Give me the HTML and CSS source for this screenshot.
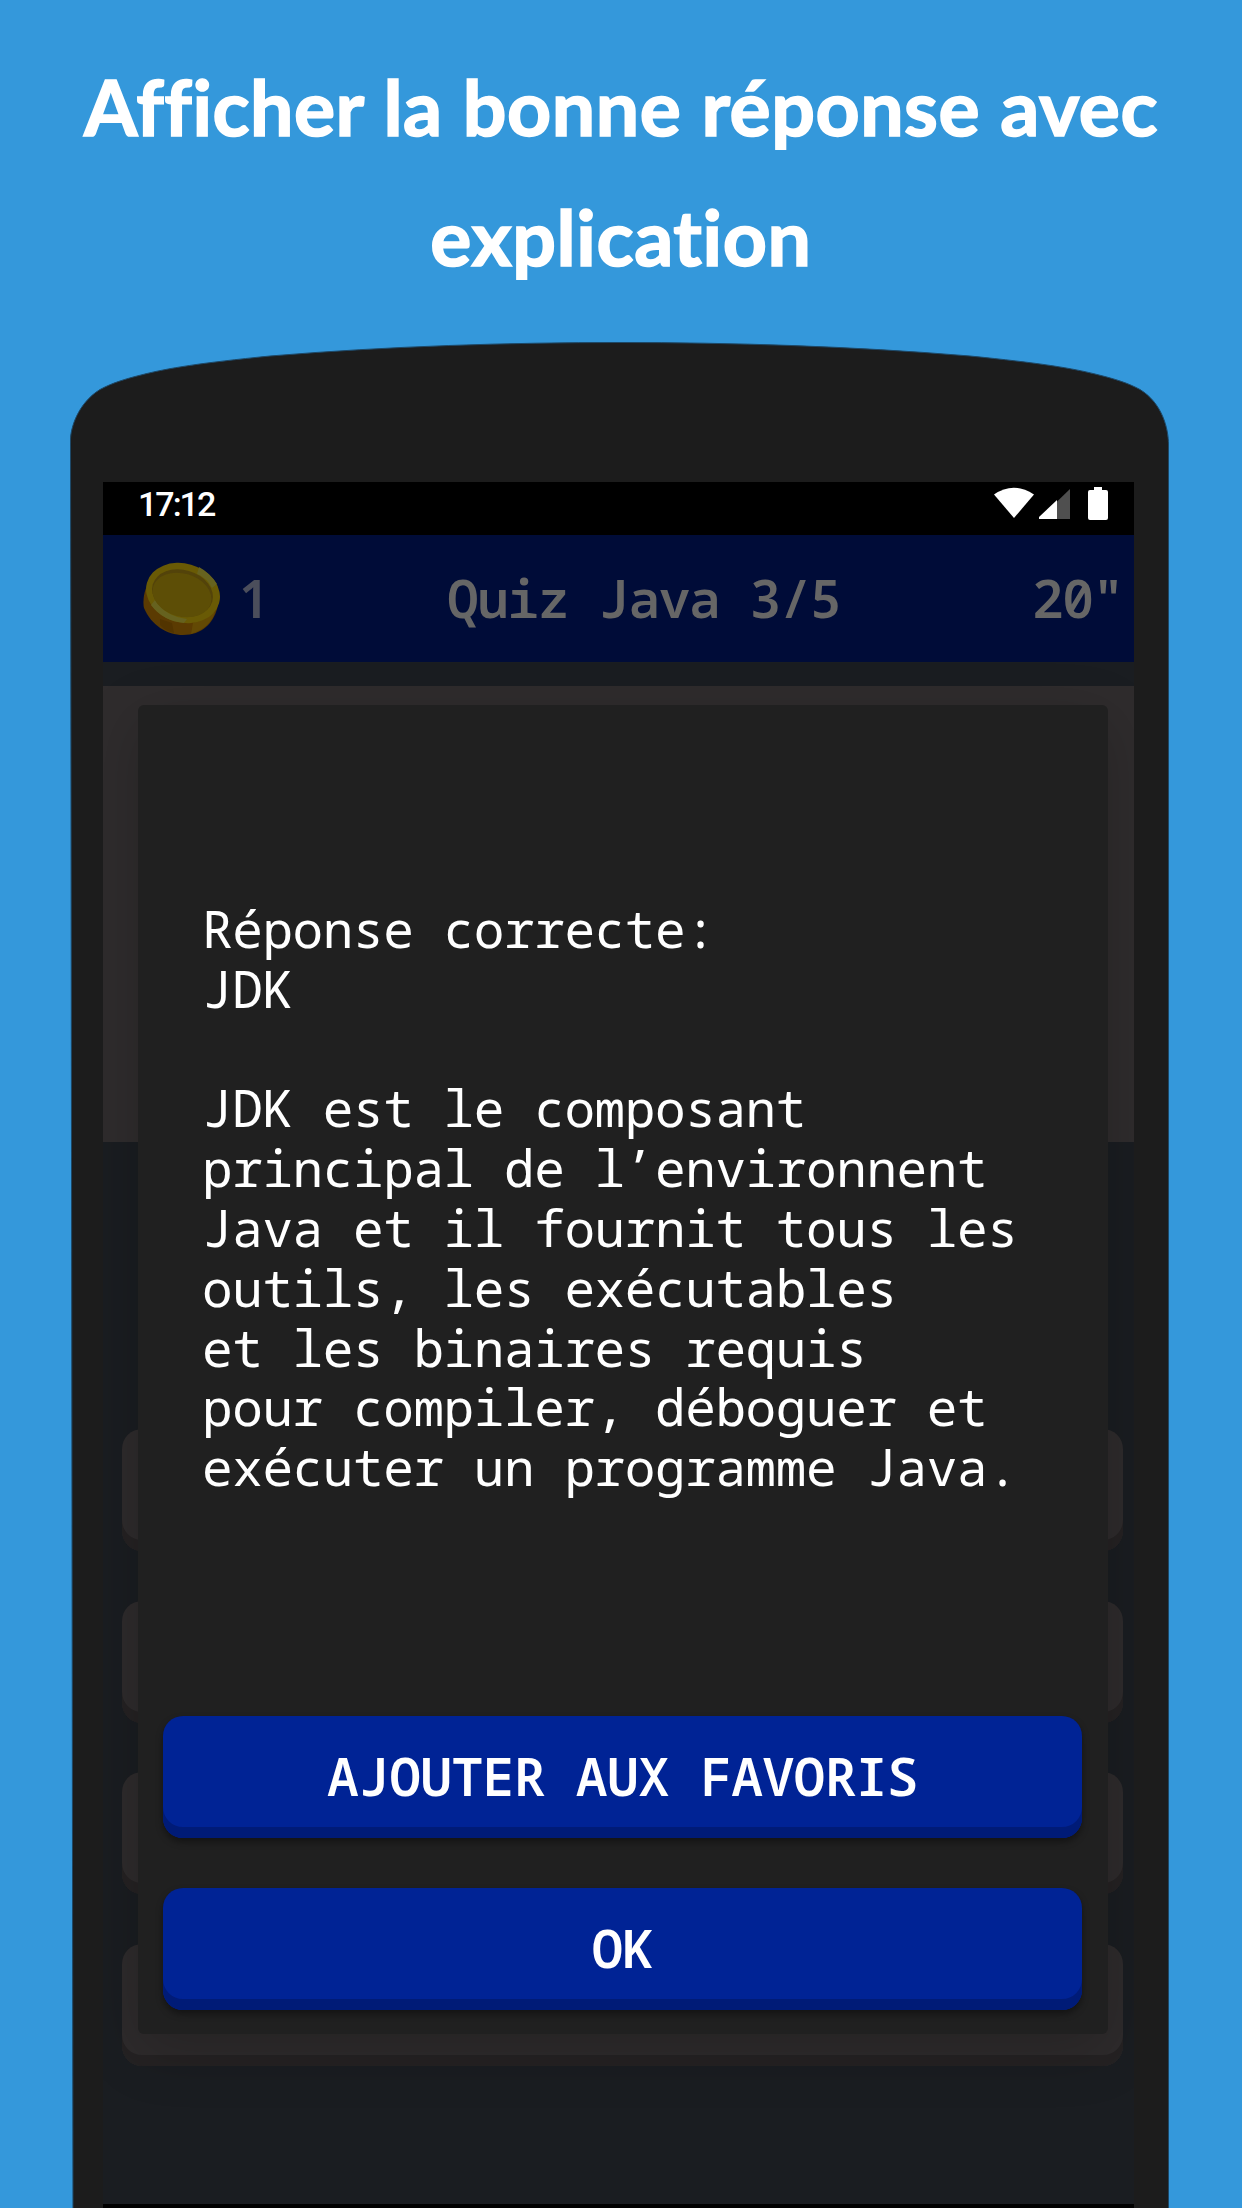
FILE: index.html
```html
<!DOCTYPE html>
<html lang="fr">
<head>
<meta charset="utf-8">
<title>Quiz Java</title>
<link rel="stylesheet" href="styles.css">
</head>
<body>
<h1 class="headline"><span class="headline-first">Afficher la bonne réponse avec</span><span class="headline-second">explication</span></h1>
<main class="phone">
  <svg class="phone-shell" viewBox="0 0 1242 1868" aria-hidden="true">
    <path d="M73 1870L70.500 100C70.500 88 78 63 100 49.500C112 43 125 39 141 35C168 28 200 23 270 16C390 6 510 2.500 620 2.500C730 2.500 850 6 970 16C1040 23 1072 28 1099 35C1115 39 1128 43 1140 49.500C1162 63 1168.500 88 1168.500 105V1870Z" fill="#1c1c1c" stroke="#1d4867" stroke-width="1"/>
  </svg>
  <div class="screen">
    <div class="status-bar">
      <span class="clock">17:12</span>
      <svg class="status-icons" viewBox="0 0 116 36" aria-hidden="true">
        <path d="M0 7.500Q19.500-6 40 7.500L20 31Z" fill="#fff"/>
        <path d="M45 32L76 2V32Z" fill="#4f4f4f"/>
        <path d="M45 32V30L63 13V32Z" fill="#fff"/>
        <path d="M100 0H108V3H112Q114 3 114 5V31Q114 33 112 33H96Q94 33 94 31V5Q94 3 96 3H100Z" fill="#fff"/>
      </svg>
    </div>
    <header class="quiz-bar">
      <div class="coins">
        <svg class="coin" viewBox="0 0 78 74" aria-hidden="true">
          <path d="M4 24C0 32 0 42 1 46C8 63 24 73 40 73C59 73 70 61 74 47L77 34L40 10Z" fill="#5b3b02"/>
          <path d="M17 57L29 61L31 71Q22 69 17 63Z" fill="#523400"/>
          <path d="M50 61L72 50Q67 66 48 72Z" fill="#634904"/>
          <ellipse cx="40" cy="31" rx="37.500" ry="29.500" transform="rotate(16 40 31)" fill="#695a05"/>
          <path d="M56 5Q67 11 74 22L69 26Q64 16 54 12ZM12 38Q22 54 44 57L41 61Q20 59 8 43Z" fill="#66621f"/>
          <ellipse cx="39.500" cy="31" rx="31" ry="23" transform="rotate(16 39.500 31)" fill="#53430a"/>
          <ellipse cx="39" cy="33" rx="30" ry="21.500" transform="rotate(16 39 33)" fill="#5d4e06"/>
        </svg>
        <span class="coin-count">1</span>
      </div>
      <span class="quiz-title">Quiz Java 3/5</span>
      <span class="timer">20"</span>
    </header>
    <div class="question"></div>
    <div class="answers">
      <div class="answer"></div>
      <div class="answer"></div>
      <div class="answer"></div>
      <div class="answer"></div>
    </div>
    <div class="nav-bar"></div>
    <section class="dialog">
      <p class="explanation">Réponse correcte:
JDK

JDK est le composant
principal de l’environnent
Java et il fournit tous les
outils, les exécutables
et les binaires requis
pour compiler, déboguer et
exécuter un programme Java.</p>
      <button class="action">AJOUTER AUX FAVORIS</button>
      <button class="action">OK</button>
    </section>
  </div>
</main>
</body>
</html>
```
FILE: styles.css
```css
* { box-sizing: border-box; }
body {
  margin: 0;
  width: 1242px;
  height: 2208px;
  overflow: hidden;
  background: #3498db;
  font-family: "Noto Sans Mono", "Droid Sans Mono", "DejaVu Sans Mono", monospace;
}
.headline {
  margin: 0;
  height: 340px;
  padding-top: 41px;
  display: flex;
  flex-direction: column;
  align-items: center;
  color: #fff;
  font: 700 77px/130px Lato, sans-serif;
  font-variant-ligatures: none;
  letter-spacing: .6px;
  -webkit-text-stroke: 1.600px #fff;
  white-space: nowrap;
}
.headline-first { letter-spacing: .5px; word-spacing: 1px; }
.phone {
  position: relative;
  height: 1868px;
  padding: 142px 108px 0 103px;
}
.phone-shell {
  position: absolute;
  left: 0;
  top: 0;
  width: 1242px;
  height: 1868px;
}
.screen {
  position: relative;
  height: 1726px;
  overflow: hidden;
  background: #1a1d21;
}
.status-bar {
  height: 53px;
  padding: 5px 24px 0 35px;
  display: flex;
  justify-content: space-between;
  background: #000;
}
.clock {
  color: #fff;
  font: 500 34px/34px Roboto, sans-serif;
  letter-spacing: -2px;
}
.status-icons { width: 116px; height: 36px; }
.quiz-bar {
  height: 127px;
  padding: 0 12px 3px 40px;
  display: grid;
  grid-template-columns: 304px 1fr 90px;
  align-items: center;
  background: #000c38;
  color: #666;
  font-size: 53px;
  font-weight: 600;
  letter-spacing: -1.550px;
}
.coins { display: flex; align-items: center; gap: 18px; }
.coin { width: 78px; height: 74px; margin-top: 3px; }
.coin-count { color: #4b4e5b; font-family: "Noto Sans", sans-serif; }
.question {
  height: 456px;
  margin-top: 24px;
  background: #2f2c2d;
}
.answers {
  padding: 287px 11px 0 19px;
  display: flex;
  flex-direction: column;
  gap: 49.700px;
}
.answer {
  height: 122px;
  border-radius: 20px;
  background: #2e2b2c;
  box-shadow: inset 0 -11px #252223;
}
.nav-bar { height: 4px; margin-top: 138px; background: #000; }
.dialog {
  position: absolute;
  left: 35px;
  top: 223px;
  width: 969.500px;
  height: 1329px;
  padding: 194px 25px 0;
  border-radius: 6px;
  background: #202020;
  box-shadow: 0 16px 60px rgba(0, 0, 0, .2);
}
.explanation {
  margin: 0 0 203px 39px;
  height: 614px;
  color: #fff;
  font-size: 51px;
  line-height: 59.800px;
  letter-spacing: -.4px;
  white-space: pre;
}
.action {
  display: block;
  width: 919px;
  height: 122px;
  margin: 0 0 50px;
  padding: 0 0 3px;
  border: 0;
  border-radius: 20px;
  background: #002395;
  box-shadow: inset 0 -11px #001b77, 0 4px 7px rgba(0, 0, 0, .4);
  color: #fff;
  font: 600 53px/1 "Noto Sans Mono", "Droid Sans Mono", "DejaVu Sans Mono", monospace;
  letter-spacing: -.7px;
}
```
